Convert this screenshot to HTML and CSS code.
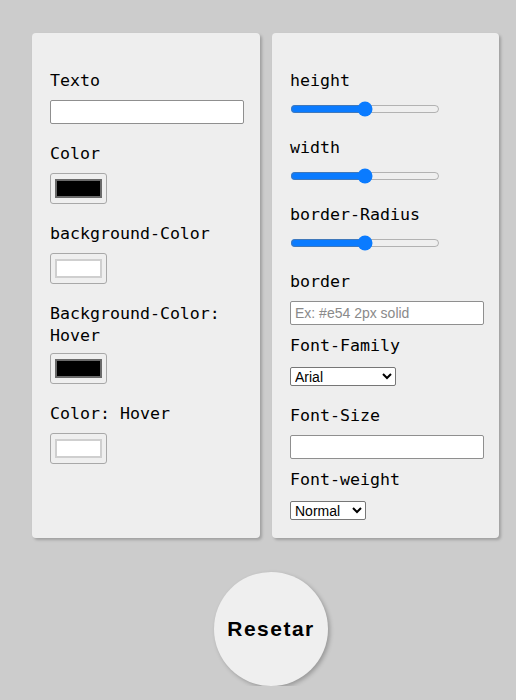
FILE: index.html
```html
<!DOCTYPE html>
<html lang="pt">
<head>
<meta charset="utf-8">
<title>Editor de botão</title>
<link rel="stylesheet" href="styles.css">
</head>
<body>
<div class="panels">
  <div class="card">
    <div class="field">
      <label class="label">Texto</label>
      <input class="text" type="text">
    </div>
    <div class="field">
      <label class="label">Color</label>
      <input class="color dark" type="color" value="#000000">
    </div>
    <div class="field">
      <label class="label">background-Color</label>
      <input class="color light" type="color" value="#ffffff">
    </div>
    <div class="field">
      <label class="label two">Background-Color:<br>Hover</label>
      <input class="color dark" type="color" value="#000000">
    </div>
    <div class="field">
      <label class="label">Color: Hover</label>
      <input class="color light" type="color" value="#ffffff">
    </div>
  </div>
  <div class="card">
    <div class="field">
      <label class="label">height</label>
      <input class="range" type="range" min="0" max="100" value="50">
    </div>
    <div class="field">
      <label class="label">width</label>
      <input class="range" type="range" min="0" max="100" value="50">
    </div>
    <div class="field">
      <label class="label">border-Radius</label>
      <input class="range" type="range" min="0" max="100" value="50">
    </div>
    <div class="field tight">
      <label class="label">border</label>
      <input class="text" type="text" placeholder="Ex: #e54 2px solid">
    </div>
    <div class="field">
      <label class="label sel">Font-Family</label>
      <select class="select family"><option>Arial</option></select>
    </div>
    <div class="field tight">
      <label class="label">Font-Size</label>
      <input class="text" type="text">
    </div>
    <div class="field last">
      <label class="label sel">Font-weight</label>
      <select class="select weight"><option>Normal</option></select>
    </div>
  </div>
</div>
<div class="actions">
  <button class="reset" type="button">Resetar</button>
</div>
</body>
</html>
```
FILE: styles.css
```css
html, body {
  margin: 0;
  padding: 0;
  background: #cccccc;
}
body {
  font-family: "DejaVu Sans Mono", monospace;
}
.panels {
  display: flex;
  gap: 12px;
  padding: 33px 0 0 32px;
}
.card {
  flex: 0 0 228px;
  min-width: 0;
  box-sizing: border-box;
  background: #eeeeee;
  border-radius: 4px;
  box-shadow: 2px 2px 3px rgba(0, 0, 0, 0.22);
  padding: 36px 18px 19px 18px;
  height: 505px;
}
.card + .card {
  flex-basis: 227px;
}
.field {
  display: flex;
  flex-direction: column;
  align-items: flex-start;
  margin-bottom: 18px;
}
.field.tight {
  margin-bottom: 9px;
}
.field.last {
  margin-bottom: 0;
}
.label {
  display: block;
  font-size: 16.6px;
  line-height: 22px;
  padding-top: 1px;
  color: #000;
  margin-bottom: 8px;
}
.label.two {
  margin-bottom: 6px;
}
.label.sel {
  margin-bottom: 10px;
}
.text {
  box-sizing: border-box;
  width: 194px;
  height: 24px;
  margin: 0;
  border: 1px solid #8f8f8f;
  border-radius: 2px;
  background: #fff;
  padding: 1px 4px;
  font-family: Arial, "Liberation Sans", sans-serif;
  font-size: 14px;
}
.text::placeholder {
  color: #8a8a8a;
}
.color {
  -webkit-appearance: none;
  appearance: none;
  box-sizing: border-box;
  width: 57px;
  height: 31px;
  margin: 0;
  padding: 0;
  border: 1px solid #a8a8a8;
  border-radius: 3px;
  background: #efefef;
  cursor: pointer;
}
.color::-webkit-color-swatch-wrapper {
  padding: 5px 4px;
}
.color.dark::-webkit-color-swatch {
  border: 2px solid #6a6a6a;
  border-radius: 0;
}
.color.light::-webkit-color-swatch {
  border: 2px solid #cfcfcf;
  border-radius: 0;
}
.range {
  width: 150px;
  height: 16px;
  margin: 1px 0;
  accent-color: #0a7bff;
}
.select {
  box-sizing: border-box;
  height: 19px;
  margin: 0;
  font-family: Arial, "Liberation Sans", sans-serif;
  font-size: 14px;
  border: 1px solid #767676;
  border-radius: 2px;
  background: #fff;
  color: #000;
}
.select.family {
  width: 106px;
}
.select.weight {
  width: 76px;
}
.actions {
  display: flex;
  justify-content: center;
  padding: 34px 0 0 26px;
}
.reset {
  width: 114px;
  height: 114px;
  border-radius: 50%;
  border: none;
  background: #efefef;
  box-shadow: 2px 2px 4px rgba(0, 0, 0, 0.25);
  font-family: Arial, "Liberation Sans", sans-serif;
  font-weight: bold;
  font-size: 21px;
  letter-spacing: 1.5px;
  color: #000;
  padding: 0;
  cursor: pointer;
}
```
